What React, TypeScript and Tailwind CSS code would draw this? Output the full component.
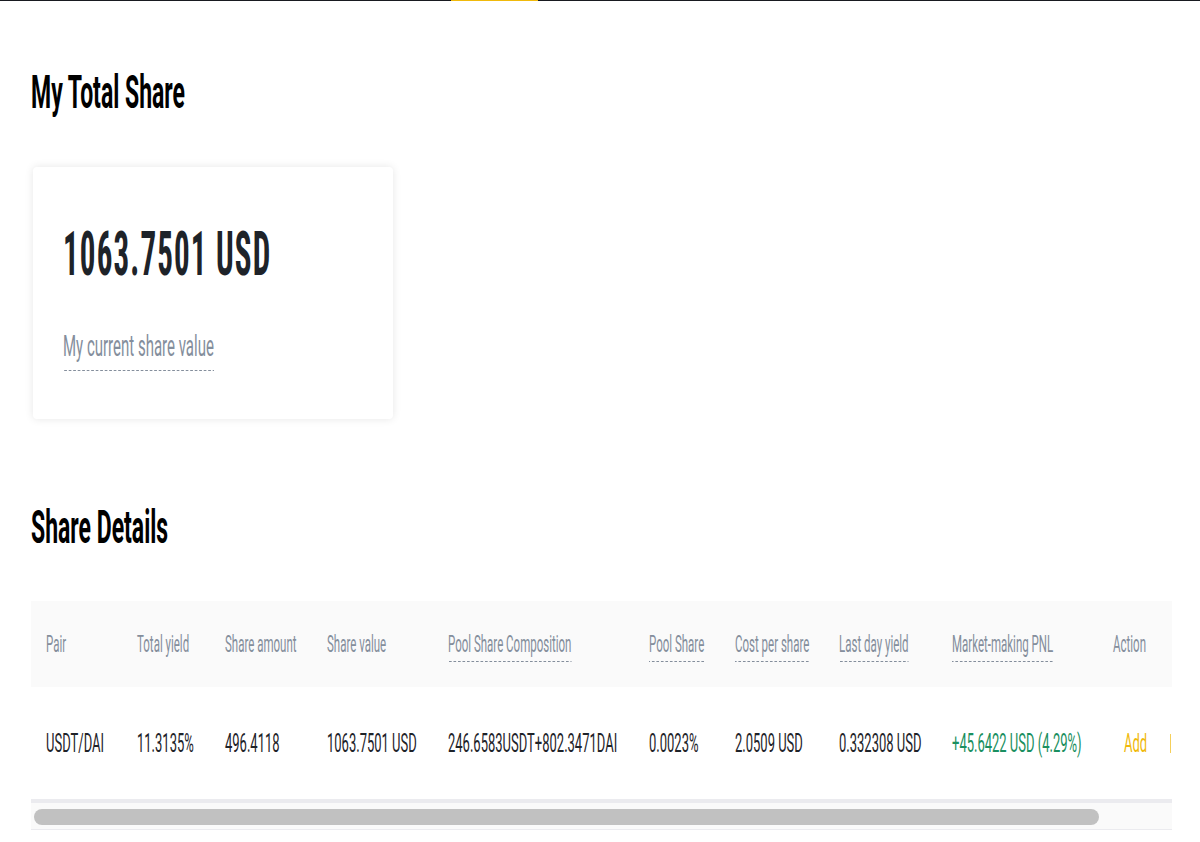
import React from 'react';

// Columns of the share details table (widths are in the page's unscaled units)
const columns = [
  { label: 'Pair' },
  { label: 'Total yield' },
  { label: 'Share amount' },
  { label: 'Share value' },
  { label: 'Pool Share Composition', tip: true },
  { label: 'Pool Share', tip: true },
  { label: 'Cost per share', tip: true },
  { label: 'Last day yield', tip: true },
  { label: 'Market-making PNL', tip: true },
  { label: 'Action' },
];

const row = [
  'USDT/DAI',
  '11.3135%',
  '496.4118',
  '1063.7501 USD',
  '246.6583USDT+802.3471DAI',
  '0.0023%',
  '2.0509 USD',
  '0.332308 USD',
];

const gridCols =
  'grid grid-cols-[182px_176px_204px_242px_402px_172px_208px_226px_322px_max-content] pl-[30px] whitespace-nowrap';

// dashed underline used for the hint labels
const dashed =
  'w-fit bg-[linear-gradient(to_right,#848e9c_66%,transparent_0)] bg-[length:9px_1px] bg-bottom bg-repeat-x';

const App: React.FC = () => {
  return (
    <div className="w-[1200px] min-h-[842px] overflow-hidden bg-white">
      {/* the page is laid out wide and narrowed horizontally, as in the capture */}
      <div className="w-[2400px] origin-top-left scale-x-50 font-['Roboto','Liberation_Sans',sans-serif]">
        <div className="h-px bg-[#181a20]">
          <div className="ml-[902px] h-px w-[174px] bg-[#f0b90b]" />
        </div>

        <div className="pl-[62px] pt-[68px]">
          <h1 className="text-[46px] leading-[46px] font-bold text-black">My Total Share</h1>

          <div className="mt-[52px] ml-[4px] h-[252px] w-[720px] rounded-[8px/4px] bg-white pt-[56px] pl-[60px] shadow-[0_0_12px_rgba(0,0,0,0.1)]">
            <div className="text-[62px] leading-[62px] font-bold text-[#1e2329] [font-stretch:condensed] tracking-[2.3px]">
              1063.7501 USD
            </div>
            <div className={`${dashed} mt-[46px] pb-[10px] text-[30px] leading-[30px] text-[#848e9c]`}>
              My current share value
            </div>
          </div>

          <h2 className="mt-[85px] text-[46px] leading-[46px] font-bold text-black">Share Details</h2>

          <div className="mt-[51px] w-[2282px] overflow-hidden">
            <div className={`${gridCols} h-[86px] bg-[#fafafa] pt-[32px] text-[23px] leading-[23px] text-[#848e9c]`}>
              {columns.map((c) => (
                <div key={c.label}>
                  <div className={c.tip ? `${dashed} pb-[6px]` : 'w-fit'}>{c.label}</div>
                </div>
              ))}
            </div>

            <div className={`${gridCols} h-[112px] items-center text-[26px] leading-[26px] text-[#1e2329]`}>
              {row.map((v, i) => (
                <div key={i}>{v}</div>
              ))}
              <div className="text-[#1a8f60]">+45.6422 USD (4.29%)</div>
              <div className="flex items-center text-[#f0b90b]">
                <span className="ml-[22px]">Add</span>
                <span className="ml-[46px] h-[19px] w-[4px] border-l-2 border-[#f5cf5a]" />
              </div>
            </div>

            <div className="h-[31px] border-t-4 border-b border-[#ebebef] bg-[#fafafa] pt-[6px] pl-[6px]">
              <div className="h-[16px] w-[2130px] rounded-[16px/8px] bg-[#c1c1c1]" />
            </div>
          </div>
        </div>
      </div>
    </div>
  );
};

export default App;
